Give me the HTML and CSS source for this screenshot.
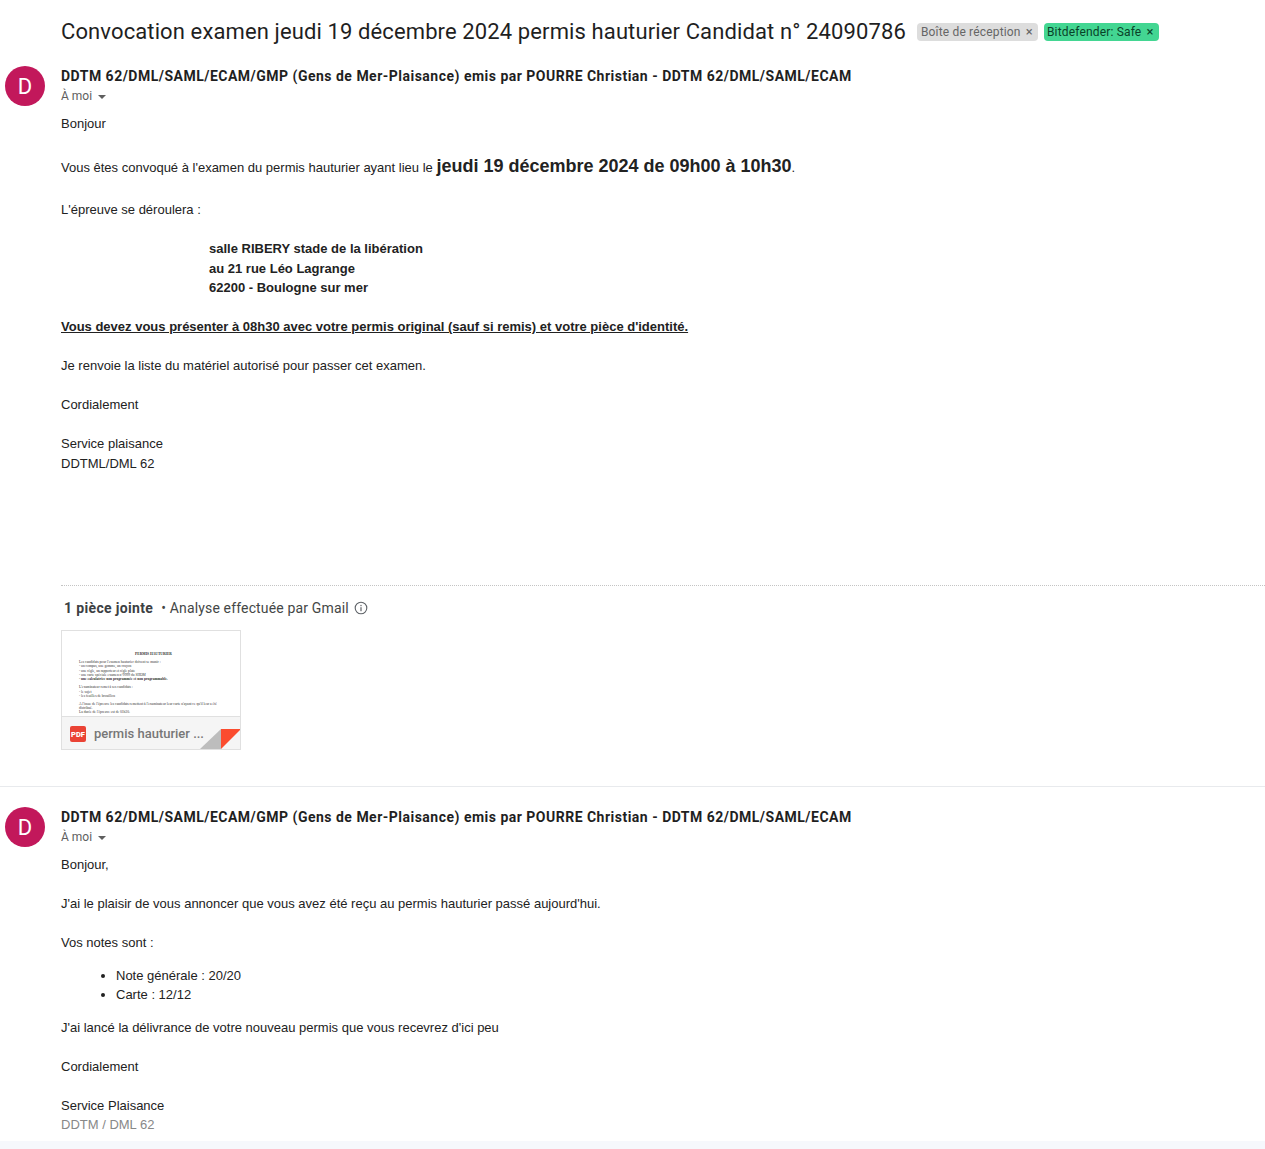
FILE: index.html
```html
<!DOCTYPE html>
<html lang="fr">
<head>
    <meta charset="UTF-8">
    <title>Convocation examen</title>
    <link rel="stylesheet" href="styles.css">
</head>
<body>

<div class="subject-row">
    <h1 class="subject">Convocation examen jeudi 19 décembre 2024 permis hauturier Candidat n° 24090786</h1>
    <span class="label label-inbox">Boîte de réception <span class="label-x">×</span></span>
    <span class="label label-safe">Bitdefender: Safe <span class="label-x">×</span></span>
</div>

<div class="message message-first">
    <div class="avatar">D</div>
    <div class="message-main">
        <div class="sender">DDTM 62/DML/SAML/ECAM/GMP (Gens de Mer-Plaisance) emis par POURRE Christian - DDTM 62/DML/SAML/ECAM</div>
        <div class="to">À moi <span class="caret"></span></div>
        <div class="mail-body">
            <p class="para">Bonjour</p>
            <p class="para para-big">Vous êtes convoqué à l'examen du permis hauturier ayant lieu le <b class="big">jeudi 19 décembre 2024 de 09h00 à 10h30</b>.</p>
            <p class="para">L'épreuve se déroulera :</p>
            <p class="para address"><b>salle RIBERY stade de la libération<br>au 21 rue Léo Lagrange<br>62200 - Boulogne sur mer</b></p>
            <p class="para"><b><u>Vous devez vous présenter à 08h30 avec votre permis original (sauf si remis) et votre pièce d'identité.</u></b></p>
            <p class="para">Je renvoie la liste du matériel autorisé pour passer cet examen.</p>
            <p class="para">Cordialement</p>
            <p class="para">Service plaisance<br>DDTML/DML 62</p>
        </div>
        <div class="attach">
            <div class="attach-head">
                <b class="attach-count">1 pièce jointe</b>
                <span class="attach-note">• Analyse effectuée par Gmail</span>
                <svg class="info-icon" width="14" height="14" viewBox="0 0 14 14">
                    <circle cx="7" cy="7" r="5.8" fill="none" stroke="#5f6368" stroke-width="1.1"/>
                    <rect x="6.4" y="6.2" width="1.2" height="4" fill="#5f6368"/>
                    <rect x="6.4" y="3.9" width="1.2" height="1.3" fill="#5f6368"/>
                </svg>
            </div>
            <div class="attach-card">
                <div class="doc-preview">
                    <div class="doc-title">PERMIS HAUTURIER</div>
                    <div>Les candidats pour l'examen hauturier doivent se munir :</div>
                    <div>- un compas, une gomme, un crayon</div>
                    <div>- une règle, un rapporteur et règle plate</div>
                    <div>- une carte spéciale examen n°9999 du SHOM</div>
                    <div class="doc-strong">- une calculatrice non programmée et non programmable.</div>
                    <div class="doc-gap">L'examinateur remet à ses candidats :</div>
                    <div>- le sujet</div>
                    <div>- les feuilles de brouillon</div>
                    <div class="doc-gap">A l'issue de l'épreuve les candidats remettent à l'examinateur leur carte n'ayant ce qu'il leur a été<br>distribué.</div>
                    <div class="doc-last">La durée de l'épreuve est de 01h30.</div>
                </div>
                <div class="attach-foot">
                    <svg class="pdf-icon" width="16" height="16" viewBox="0 0 16 16">
                        <rect width="16" height="16" rx="2" fill="#ea4335"/>
                        <text x="8" y="10.8" text-anchor="middle" class="pdf-text">PDF</text>
                    </svg>
                    <span class="attach-name">permis hauturier ...</span>
                </div>
                <svg class="corner" width="41" height="21" viewBox="0 0 41 21">
                    <polygon points="0,20 21,0 21,20" fill="#bdbdbd"/>
                    <polygon points="21,0 41,0 21,20" fill="#fb4c2f"/>
                </svg>
            </div>
        </div>
    </div>
</div>

<div class="message message-second">
    <div class="avatar">D</div>
    <div class="message-main">
        <div class="sender">DDTM 62/DML/SAML/ECAM/GMP (Gens de Mer-Plaisance) emis par POURRE Christian - DDTM 62/DML/SAML/ECAM</div>
        <div class="to">À moi <span class="caret"></span></div>
        <div class="mail-body">
            <p class="para">Bonjour,</p>
            <p class="para">J'ai le plaisir de vous annoncer que vous avez été reçu au permis hauturier passé aujourd'hui.</p>
            <p class="para para-tight">Vos notes sont :</p>
            <ul class="notes">
                <li>Note générale : 20/20</li>
                <li>Carte : 12/12</li>
            </ul>
            <p class="para">J'ai lancé la délivrance de votre nouveau permis que vous recevrez d'ici peu</p>
            <p class="para">Cordialement</p>
            <p class="para para-tight">Service Plaisance<br><span class="muted">DDTM / DML 62</span></p>
        </div>
    </div>
</div>

<div class="bottom-band"></div>

</body>
</html>
```

FILE: styles.css
```css
/* Global */
body {
    margin: 0;
    background: #fff;
    color: #222;
    font-family: Roboto, 'Liberation Sans', sans-serif;
    font-size: 14px;
    height: 1149px;
    overflow: hidden;
    display: flex;
    flex-direction: column;
}

/* Subject line */
.subject-row {
    display: flex;
    flex: none;
    align-items: center;
    height: 28px;
    padding: 18px 0 0 61px;
}

.subject {
    margin: 0 11px 0 0;
    font-family: Roboto, sans-serif;
    font-size: 22px;
    font-weight: 400;
    letter-spacing: 0.115px;
    color: #1f1f1f;
    line-height: 28px;
    white-space: nowrap;
}

.label {
    display: inline-block;
    height: 18px;
    line-height: 17px;
    padding: 0 5px 0 4px;
    margin-right: 6px;
    border-radius: 4px;
    font-size: 12px;
    letter-spacing: 0.17px;
    white-space: nowrap;
}

.label-inbox {
    background: #dddddd;
    color: #666;
}

.label-safe {
    background: #43d692;
    color: #094228;
    padding-left: 3px;
}

.label-x {
    font-size: 13px;
    margin-left: 2px;
}

/* Message */
.message {
    display: flex;
    flex: none;
    padding-left: 5px;
}

.message-first {
    padding-top: 20px;
    height: 720px;
    border-bottom: 1px solid #e8eaed;
}

.message-second {
    padding-top: 20px;
}

.avatar {
    flex: none;
    width: 40px;
    height: 40px;
    border-radius: 50%;
    background: #c2185b;
    color: #fff;
    font-size: 22px;
    line-height: 41px;
    text-align: center;
    margin-right: 16px;
}

.message-main {
    flex: 1;
}

.sender {
    font-weight: 700;
    font-size: 14px;
    letter-spacing: 0.49px;
    line-height: 20px;
    color: #1f1f1f;
    white-space: nowrap;
}

.to {
    font-size: 12px;
    color: #5e5e5e;
    line-height: 20px;
}

.caret {
    display: inline-block;
    width: 0;
    height: 0;
    margin-left: 3px;
    border-left: 4px solid transparent;
    border-right: 4px solid transparent;
    border-top: 4px solid #5e5e5e;
    vertical-align: middle;
}

/* Mail text */
.mail-body {
    padding-top: 8px;
    font-family: 'Liberation Sans', Arial, sans-serif;
    font-size: 13px;
    line-height: 19.5px;
    color: #222;
}

.para {
    margin: 0 0 19.5px;
}

.para-big {
    padding-top: 2px;
    line-height: 23.5px;
    margin-bottom: 20.5px;
}

.big {
    font-size: 18px;
}

.para-tight {
    margin-bottom: 0;
}

.address {
    padding-left: 148px;
}

.notes {
    margin: 13px 0 13px;
    padding-left: 55px;
}

.muted {
    color: #888;
}

/* Attachment */
.attach {
    margin-top: 112px;
    border-top: 1px dotted #c4c4c4;
}

.attach-head {
    display: flex;
    align-items: center;
    height: 20px;
    padding: 12px 0 12px 3px;
    color: #444746;
    font-size: 14px;
    letter-spacing: 0.15px;
}

.attach-count {
    color: #3c4043;
    font-weight: 700;
    letter-spacing: 0.35px;
    margin-right: 8px;
}

.attach-note {
    margin-right: 5px;
}

.attach-card {
    position: relative;
    box-sizing: border-box;
    width: 180px;
    height: 120px;
    border: 1px solid #e0e0e0;
    overflow: hidden;
}

.doc-preview {
    height: 85px;
    padding: 21px 12px 0 17px;
    box-sizing: border-box;
    overflow: hidden;
    font-family: 'Liberation Serif', serif;
    font-size: 3.6px;
    line-height: 4.2px;
    color: #333;
    white-space: nowrap;
}

.doc-title {
    font-weight: 700;
    text-align: center;
    margin-bottom: 4px;
}

.doc-strong {
    font-weight: 700;
}

.doc-gap {
    margin-top: 4.2px;
}

.doc-last {
    line-height: 3.6px;
}

.attach-foot {
    display: flex;
    align-items: center;
    height: 33px;
    padding-left: 8px;
    background: #f5f5f5;
    border-top: 1px solid #e0e0e0;
}

.pdf-icon {
    flex: none;
}

.pdf-text {
    font-family: Roboto, sans-serif;
    font-size: 7.5px;
    font-weight: 900;
    fill: #fff;
}

.attach-name {
    margin-left: 8px;
    font-size: 13px;
    font-weight: 500;
    color: #777;
    white-space: nowrap;
}

.corner {
    position: absolute;
    right: -1px;
    bottom: -1px;
}

.bottom-band {
    margin-top: auto;
    flex: none;
    height: 8px;
    background: #f6f8fc;
}
```
